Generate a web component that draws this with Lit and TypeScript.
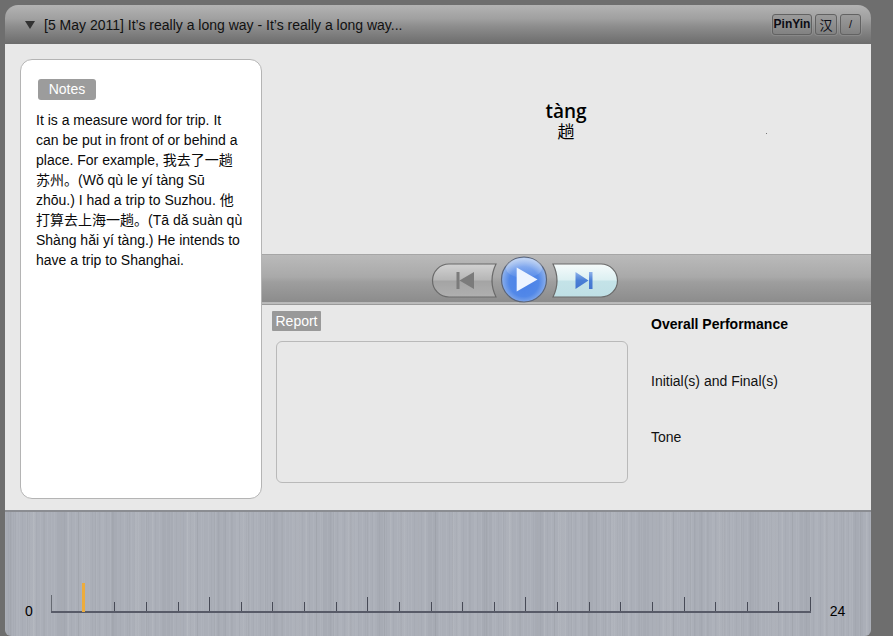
import { LitElement, html, css, svg } from "lit";
import { customElement } from "lit/decorators.js";

const SPACING = 759 / 24;

@customElement("app-root")
export class AppRoot extends LitElement {
  static styles = css`
    :host {
      display: block;
      width: 893px;
      height: 636px;
      overflow: hidden;
      background: #6e6e6e;
      font-family: "Liberation Sans", "Noto Sans CJK SC", sans-serif;
      font-size: 14px;
      color: #000;
    }
    .frame {
      box-sizing: border-box;
      height: 636px;
      padding: 5px 22px 0 5px;
    }
    .window {
      height: 631px;
      display: flex;
      flex-direction: column;
      border-radius: 13px 13px 6px 6px;
      overflow: hidden;
    }
    .header {
      height: 39px;
      flex: none;
      box-sizing: border-box;
      display: flex;
      align-items: center;
      padding: 0 10px 0 20px;
      background: linear-gradient(#b3b3b3 0%, #a0a0a0 35%, #8d8d8d 55%, #6c6c6c 100%);
    }
    .caret {
      width: 0;
      height: 0;
      border-left: 5px solid transparent;
      border-right: 5px solid transparent;
      border-top: 8px solid #333;
      margin-right: 9px;
      margin-top: 1px;
    }
    .title {
      flex: 1;
      color: #111;
      font-size: 14px;
      white-space: nowrap;
    }
    .hbtns {
      display: flex;
      gap: 3px;
      margin-top: -1px;
    }
    .hbtn {
      box-sizing: border-box;
      height: 21px;
      display: flex;
      align-items: center;
      justify-content: center;
      border: 1px solid #626262;
      border-radius: 3px;
      box-shadow: 0 0 0 1px rgba(170, 170, 170, 0.3);
      background: linear-gradient(#9b9b9b, #828282);
      font-size: 12px;
      font-weight: bold;
      color: #0c0c14;
    }
    .hbtn.py { width: 40px; }
    .hbtn.han { width: 22px; font-size: 13px; font-weight: normal; }
    .hbtn.sl { width: 21px; font-weight: normal; font-size: 11px; }

    .main {
      height: 466px;
      flex: none;
      display: grid;
      grid-template-columns: 256px 1fr;
      background: #e8e8e8;
    }
    .left {
      box-sizing: border-box;
      padding: 15px 0 11px 15px;
      display: flex;
      position: relative;
      z-index: 1;
    }
    .card {
      box-sizing: border-box;
      width: 242px;
      flex: none;
      background: #fff;
      border: 1px solid #b4b4b4;
      border-radius: 12px;
      padding: 19px 14px 0 15px;
    }
    .tag {
      display: inline-block;
      width: 58px;
      text-align: center;
      background: #9c9c9c;
      color: #fff;
      line-height: 21px;
      height: 21px;
      border-radius: 3px;
      margin-left: 2px;
    }
    .note {
      margin-top: 10px;
      line-height: 20px;
      font-size: 14px;
      color: #0a0a0a;
    }
    .note span { display: block; white-space: nowrap; }

    .right {
      display: flex;
      flex-direction: column;
      min-width: 0;
    }
    .stage {
      height: 210px;
      box-sizing: border-box;
      padding-top: 56px;
      flex: none;
      display: flex;
      flex-direction: column;
      align-items: center;
      position: relative;
    }
    .pinyin {
      font-family: "Open Sans", "DejaVu Sans", sans-serif;
      font-weight: 600;
      font-size: 19px;
      line-height: 22px;
      color: #000;
    }
    .hanzi {
      font-family: "Noto Sans CJK SC", sans-serif;
      font-size: 17px;
      line-height: 18px;
    }
    .dot {
      position: absolute;
      left: 505px;
      top: 89px;
      width: 1px;
      height: 1px;
      background: #777;
    }
    .controls {
      height: 51px;
      flex: none;
      box-sizing: border-box;
      border-top: 1px solid #a6a6a6;
      border-bottom: 1px solid #9a9a9a;
      background: linear-gradient(#bababa 0%, #a9a9a9 45%, #9e9e9e 55%, #8c8c8c 96%, #bcbcbc 97%);
      display: flex;
      padding-left: 169px;
      align-items: center;
    }
    .controls svg { display: block; }

    .report {
      flex: 1;
      display: grid;
      grid-template-columns: 390px 1fr;
    }
    .rleft { padding: 6px 0 0 11px; }
    .rtag {
      display: block;
      width: 49px;
      text-align: center;
      background: #999;
      color: #fff;
      height: 20px;
      line-height: 20px;
      border-radius: 1px;
    }
    .rbox {
      box-sizing: border-box;
      width: 352px;
      height: 142px;
      margin: 10px 0 0 4px;
      border: 1px solid #b9b9b9;
      border-radius: 6px;
    }
    .scores {
      display: flex;
      flex-direction: column;
      padding-top: 10px;
      color: #111;
    }
    .scores div { line-height: 18px; height: 56.5px; }
    .scores .b { font-weight: bold; color: #000; }

    .footer {
      flex: 1;
      box-sizing: border-box;
      border-top: 2px solid #8b8d92;
      display: flex;
      align-items: flex-end;
      padding: 0 0 14px 20px;
      background-color: #abafb8;
      background-image:
        repeating-linear-gradient(90deg, rgba(255,255,255,0.05) 0 1px, transparent 1px 3px, rgba(0,0,0,0.025) 3px 4px, transparent 4px 7px),
        repeating-linear-gradient(90deg, transparent 0 5px, rgba(0,0,0,0.03) 5px 6px, transparent 6px 11px, rgba(255,255,255,0.04) 11px 13px, transparent 13px 17px),
        repeating-linear-gradient(90deg, rgba(0,0,0,0.025) 0 9px, transparent 9px 23px, rgba(255,255,255,0.03) 23px 31px, transparent 31px 53px);
    }
    .lab { font-size: 14px; line-height: 16px; color: #000; margin-bottom: 3px; }
    .track { display: block; flex: none; margin: 0 18px 8px 17px; }
  `;

  private renderTicks() {
    const ticks = [];
    for (let i = 0; i <= 24; i++) {
      const x = Math.round(1 + i * SPACING) + 0.5;
      const long = i % 5 === 0 || i === 24;
      const top = i === 0 ? 13 : long ? 15 : 20;
      if (i === 1) continue;
      ticks.push(svg`<line x1=${x} x2=${x} y1=${top} y2="30" stroke=${i === 0 ? "#666a72" : "#474a56"} stroke-width="1"></line>`);
    }
    return ticks;
  }

  render() {
    return html`
      <div class="frame">
        <div class="window">
          <div class="header">
            <div class="caret"></div>
            <div class="title">[5 May 2011] It’s really a long way - It’s really a long way...</div>
            <div class="hbtns">
              <div class="hbtn py">PinYin</div>
              <div class="hbtn han">汉</div>
              <div class="hbtn sl">/</div>
            </div>
          </div>
          <div class="main">
            <div class="left">
              <div class="card">
                <div class="tag">Notes</div>
                <div class="note">
                  <span>It is a measure word for trip. It</span>
                  <span>can be put in front of or behind a</span>
                  <span>place. For example, 我去了一趟</span>
                  <span>苏州。(Wǒ qù le yí tàng Sū</span>
                  <span>zhōu.) I had a trip to Suzhou. 他</span>
                  <span>打算去上海一趟。(Tā dǎ suàn qù</span>
                  <span>Shàng hǎi yí tàng.) He intends to</span>
                  <span>have a trip to Shanghai.</span>
                </div>
              </div>
            </div>
            <div class="right">
              <div class="stage">
                <div class="pinyin">tàng</div>
                <div class="hanzi">趟</div>
                <div class="dot"></div>
              </div>
              <div class="controls">
                <svg width="190" height="50" viewBox="430 255 190 50">
                  <defs>
                    <linearGradient id="gp" x1="0" y1="0" x2="0" y2="1">
                      <stop offset="0" stop-color="#d2d2d2"></stop>
                      <stop offset="0.48" stop-color="#b6b6b6"></stop>
                      <stop offset="0.52" stop-color="#a4a4a4"></stop>
                      <stop offset="1" stop-color="#b0b0b0"></stop>
                    </linearGradient>
                    <linearGradient id="gn" x1="0" y1="0" x2="0" y2="1">
                      <stop offset="0" stop-color="#f6fbfb"></stop>
                      <stop offset="0.48" stop-color="#dcf0f2"></stop>
                      <stop offset="0.52" stop-color="#c4e3e8"></stop>
                      <stop offset="1" stop-color="#bfdfe5"></stop>
                    </linearGradient>
                    <linearGradient id="gi" x1="0" y1="0" x2="0" y2="1">
                      <stop offset="0" stop-color="#8fb2ea"></stop>
                      <stop offset="0.5" stop-color="#4a7fd6"></stop>
                      <stop offset="1" stop-color="#4274cf"></stop>
                    </linearGradient>
                    <radialGradient id="gc" cx="0.5" cy="0.55" r="0.55">
                      <stop offset="0" stop-color="#4a80e8"></stop>
                      <stop offset="0.6" stop-color="#5288e8"></stop>
                      <stop offset="1" stop-color="#9ebcec"></stop>
                    </radialGradient>
                    <linearGradient id="gg" x1="0" y1="0" x2="0" y2="1">
                      <stop offset="0" stop-color="#fff" stop-opacity="0.45"></stop>
                      <stop offset="1" stop-color="#fff" stop-opacity="0.05"></stop>
                    </linearGradient>
                  </defs>
                  <path d="M449 264 H496 Q488 280.5 496 297 H449 A16.5 16.5 0 0 1 449 264 Z" fill="url(#gp)" stroke="#6a6a6a" stroke-width="1.2"></path>
                  <path d="M456.5 272 h3 v17 h-3 Z M474 272 V289 L459.5 280.5 Z" fill="#7b7b7b"></path>
                  <path d="M553 264 H601 A16.5 16.5 0 0 1 601 297 H553 Q561 280.5 553 264 Z" fill="url(#gn)" stroke="#6a6a6a" stroke-width="1.2"></path>
                  <path d="M575.5 272 V289 L588.5 280.5 Z M589 272 h3.5 v17 h-3.5 Z" fill="url(#gi)"></path>
                  <circle cx="524" cy="279.5" r="22.5" fill="url(#gc)" stroke="#5a6478" stroke-width="1.2"></circle>
                  <ellipse cx="524" cy="268" rx="18" ry="10" fill="url(#gg)"></ellipse>
                  <path d="M516.7 267.5 V291.5 L537.5 279.5 Z" fill="#eef4ff"></path>
                </svg>
              </div>
              <div class="report">
                <div class="rleft">
                  <div class="rtag">Report</div>
                  <div class="rbox"></div>
                </div>
                <div class="scores">
                  <div class="b">Overall Performance</div>
                  <div>Initial(s) and Final(s)</div>
                  <div>Tone</div>
                </div>
              </div>
            </div>
          </div>
          <div class="footer">
            <div class="lab">0</div>
            <svg class="track" width="762" height="32" viewBox="0 0 762 32">
              ${this.renderTicks()}
              <rect x="1" y="29" width="760" height="2" fill="#585b68"></rect>
              <rect x="32" y="1" width="3" height="29" fill="#edac3c"></rect>
            </svg>
            <div class="lab">24</div>
          </div>
        </div>
      </div>
    `;
  }
}
